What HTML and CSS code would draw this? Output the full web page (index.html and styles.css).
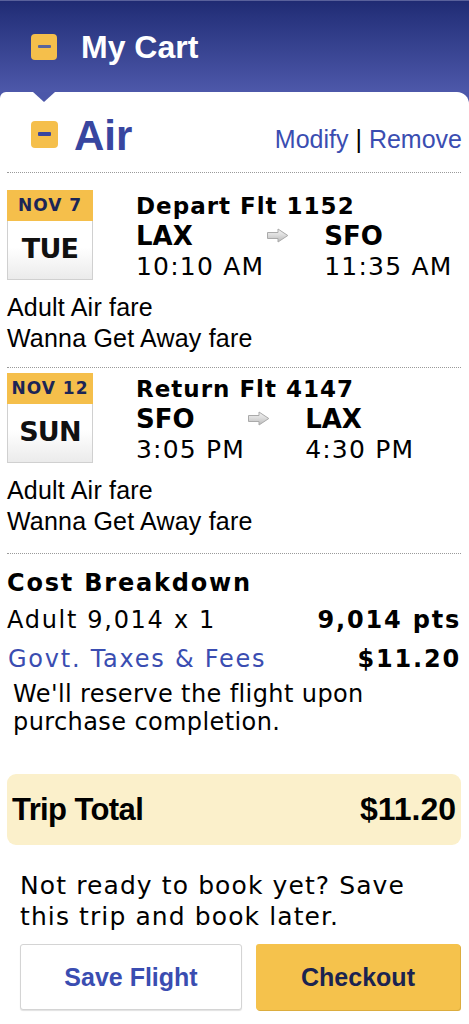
FILE: index.html
```html
<!DOCTYPE html>
<html lang="en">
<head>
<meta charset="utf-8">
<title>My Cart</title>
<link rel="stylesheet" href="styles.css">
</head>
<body>
<div class="cart">
  <header class="cart-head">
    <span class="toggle toggle--head"><span class="dash"></span></span>
    <h1 class="cart-title">My Cart</h1>
  </header>
  <section class="panel">
    <div class="air-head">
      <span class="toggle toggle--air"><span class="dash"></span></span>
      <h2 class="air-title">Air</h2>
      <div class="air-links"><a href="#">Modify</a> <span class="sep">|</span> <a href="#">Remove</a></div>
    </div>
    <div class="rule rule--first"></div>

    <div class="flight flight--depart">
      <div class="flight-row">
        <div class="date">
          <div class="date-month">NOV 7</div>
          <div class="date-day">TUE</div>
        </div>
        <div class="route">
          <div class="route-title">Depart Flt 1152</div>
          <div class="airport">LAX</div>
          <div class="arrow">
            <svg width="23" height="15" viewBox="0 0 23 15"><defs><linearGradient id="ag1" x1="0" y1="0" x2="0" y2="1"><stop offset="0" stop-color="#f2f2f2"/><stop offset="0.45" stop-color="#dedede"/><stop offset="1" stop-color="#b9b9b9"/></linearGradient></defs><path d="M1.5 4.5 H12 V1 L21.8 7.5 L12 14 V10.5 H1.5 Z" fill="url(#ag1)" stroke="#aaaaaa" stroke-width="1" stroke-linejoin="round"/></svg>
          </div>
          <div class="airport">SFO</div>
          <div class="time">10:10 AM</div>
          <div class="time time--arr">11:35 AM</div>
        </div>
      </div>
      <div class="fare">
        <div>Adult Air fare</div>
        <div>Wanna Get Away fare</div>
      </div>
    </div>
    <div class="rule rule--mid"></div>

    <div class="flight flight--return">
      <div class="flight-row">
        <div class="date">
          <div class="date-month">NOV 12</div>
          <div class="date-day">SUN</div>
        </div>
        <div class="route">
          <div class="route-title">Return Flt 4147</div>
          <div class="airport">SFO</div>
          <div class="arrow">
            <svg width="23" height="15" viewBox="0 0 23 15"><defs><linearGradient id="ag2" x1="0" y1="0" x2="0" y2="1"><stop offset="0" stop-color="#f2f2f2"/><stop offset="0.45" stop-color="#dedede"/><stop offset="1" stop-color="#b9b9b9"/></linearGradient></defs><path d="M1.5 4.5 H12 V1 L21.8 7.5 L12 14 V10.5 H1.5 Z" fill="url(#ag2)" stroke="#aaaaaa" stroke-width="1" stroke-linejoin="round"/></svg>
          </div>
          <div class="airport">LAX</div>
          <div class="time">3:05 PM</div>
          <div class="time time--arr">4:30 PM</div>
        </div>
      </div>
      <div class="fare">
        <div>Adult Air fare</div>
        <div>Wanna Get Away fare</div>
      </div>
    </div>
    <div class="rule rule--last"></div>

    <div class="cost">
      <h3 class="cost-title">Cost Breakdown</h3>
      <div class="cost-row cost-row--first">
        <span class="cost-label">Adult 9,014 x 1</span>
        <span class="cost-value">9,014 pts</span>
      </div>
      <div class="cost-row cost-row--second">
        <a href="#" class="cost-label cost-link">Govt. Taxes &amp; Fees</a>
        <span class="cost-value">$11.20</span>
      </div>
      <p class="cost-note">We'll reserve the flight upon purchase completion.</p>
    </div>

    <div class="total">
      <span class="total-label">Trip Total</span>
      <span class="total-value">$11.20</span>
    </div>

    <p class="save-note">Not ready to book yet? Save this trip and book later.</p>

    <div class="actions">
      <button class="btn btn--save">Save Flight</button>
      <button class="btn btn--checkout">Checkout</button>
    </div>
  </section>
</div>
</body>
</html>
```
FILE: styles.css
```css
* { box-sizing: border-box; }
html, body { margin: 0; padding: 0; }
body {
  width: 469px;
  background: #fff;
  font-family: "DejaVu Sans", Verdana, sans-serif;
  color: #000;
}
.cart {
  background: linear-gradient(#4c57a9, #4c57a9) top left / 100% 130px no-repeat, #fff;
}
.cart-head {
  height: 92px;
  display: flex;
  align-items: center;
  gap: 24px;
  padding-left: 31px;
  border-top: 1px solid #59619b;
  background: linear-gradient(#202b73 0%, #27337d 15%, #4d58aa 100%);
}
.toggle {
  flex: none;
  display: flex;
  align-items: center;
  justify-content: center;
  width: 26px;
  height: 26px;
  border-radius: 4px;
  background: #f5bf4b;
}
.dash {
  width: 13px;
  height: 3px;
  border-radius: 1px;
  background: #5a659c;
}
.cart-title {
  margin: 0;
  font: bold 32px/32px "Liberation Sans", Arial, sans-serif;
  color: #fff;
}
.panel {
  position: relative;
  background: #fff;
  border-radius: 6px 12px 0 0;
  padding: 0 8px 13px 7px;
}
.panel::before {
  content: "";
  position: absolute;
  left: 33px;
  top: 0;
  border-left: 11px solid transparent;
  border-right: 11px solid transparent;
  border-top: 10px solid #4c57a9;
}
.air-head {
  display: flex;
  align-items: center;
  height: 65px;
  padding: 23px 0 0 24px;
}
.toggle--air {
  width: 27px;
  height: 27px;
  margin-right: 16px;
  margin-bottom: 4px;
}
.toggle--air .dash {
  height: 4px;
  background: #3846a0;
}
.air-title {
  margin: 0;
  font: bold 42px/42px "Liberation Sans", Arial, sans-serif;
  color: #3846a0;
}
.air-links {
  margin-left: auto;
  margin-right: -1px;
  padding-top: 6px;
  font: 25px/25px "Liberation Sans", Arial, sans-serif;
}
a { color: #3a4db1; text-decoration: none; }
.sep { color: #000; }
.rule { border-top: 1px dotted #9a9a9a; }
.rule--first { margin-top: 15px; }
.rule--mid { margin-top: 13px; }
.rule--last { margin-top: 16px; }
.flight--depart { margin-top: 17px; }
.flight--return { margin-top: 5px; }
.flight-row {
  display: flex;
  align-items: flex-start;
}
.date {
  flex: none;
  width: 86px;
  margin-right: 43px;
}
.date-month {
  height: 31px;
  background: #f5bf4b;
  color: #1b2556;
  font: bold 17px/31px "DejaVu Sans", Verdana, sans-serif;
  letter-spacing: 1px;
  text-align: center;
}
.date-day {
  height: 59px;
  border: 1px solid #d0d0d0;
  border-top: 0;
  background: linear-gradient(#fff 0%, #fff 45%, #ebebeb 100%);
  color: #111;
  font: bold 27px/56px "DejaVu Sans", Verdana, sans-serif;
  letter-spacing: -0.8px;
  text-align: center;
}
.route {
  display: grid;
  grid-template-columns: auto 60px auto;
  justify-content: start;
  padding-top: 2px;
}
.route-title {
  grid-column: 1 / -1;
  font: bold 23px/28px "DejaVu Sans", Verdana, sans-serif;
  letter-spacing: 1px;
}
.airport {
  font: bold 26px/32px "DejaVu Sans", Verdana, sans-serif;
}
.arrow {
  display: flex;
  align-items: center;
  padding-left: 2px;
  padding-bottom: 2px;
}
.arrow svg { display: block; }
.time {
  font: 25px/30px "DejaVu Sans", Verdana, sans-serif;
  letter-spacing: 1.2px;
}
.time--arr { grid-column: 3; }
.fare {
  margin-top: 10px;
  font: 25px/31px "Liberation Sans", Arial, sans-serif;
  letter-spacing: 0.2px;
}
.cost { padding-top: 14px; }
.cost-title {
  margin: 0;
  font: bold 24px/30px "DejaVu Sans", Verdana, sans-serif;
  letter-spacing: 1.8px;
}
.cost-row {
  display: flex;
  justify-content: space-between;
  align-items: baseline;
  font-size: 24px;
  line-height: 36px;
}
.cost-row--first { margin-top: 4px; }
.cost-row--second { margin-top: 3px; }
.cost-label { letter-spacing: 1.7px; }
.cost-link { padding-left: 1px; letter-spacing: 1.75px; }
.cost-value {
  font-weight: bold;
  letter-spacing: 1.8px;
}
.cost-note {
  margin: 3px 0 0;
  padding-left: 6px;
  font: 24px/28px "DejaVu Sans", Verdana, sans-serif;
  letter-spacing: 0.4px;
}
.total {
  margin-top: 38px;
  height: 71px;
  display: flex;
  align-items: center;
  justify-content: space-between;
  padding: 0 5px;
  border-radius: 9px;
  background: #fbf0cb;
  font: bold 31px/31px "Liberation Sans", Arial, sans-serif;
}
.total-label { letter-spacing: -0.6px; }
.total-value { font-size: 32px; }
.save-note {
  margin: 25px 0 0;
  padding: 0 40px 0 13px;
  font: 25px/31px "DejaVu Sans", Verdana, sans-serif;
  letter-spacing: 1.1px;
}
.actions {
  margin-top: 12px;
  display: grid;
  grid-template-columns: 222px 204px;
  gap: 14px;
  padding-left: 13px;
}
.btn {
  height: 66px;
  border-radius: 3px;
  font: bold 25px/25px "Liberation Sans", Arial, sans-serif;
  cursor: pointer;
}
.btn--save {
  background: #fff;
  color: #3a4db1;
  border: 1px solid #d4d4d4;
  box-shadow: 0 1px 1px rgba(0, 0, 0, 0.12);
}
.btn--checkout {
  background: #f5c24c;
  color: #1b2350;
  border: 0;
  box-shadow: 1px 1px 0 #dcad3e;
}
```
